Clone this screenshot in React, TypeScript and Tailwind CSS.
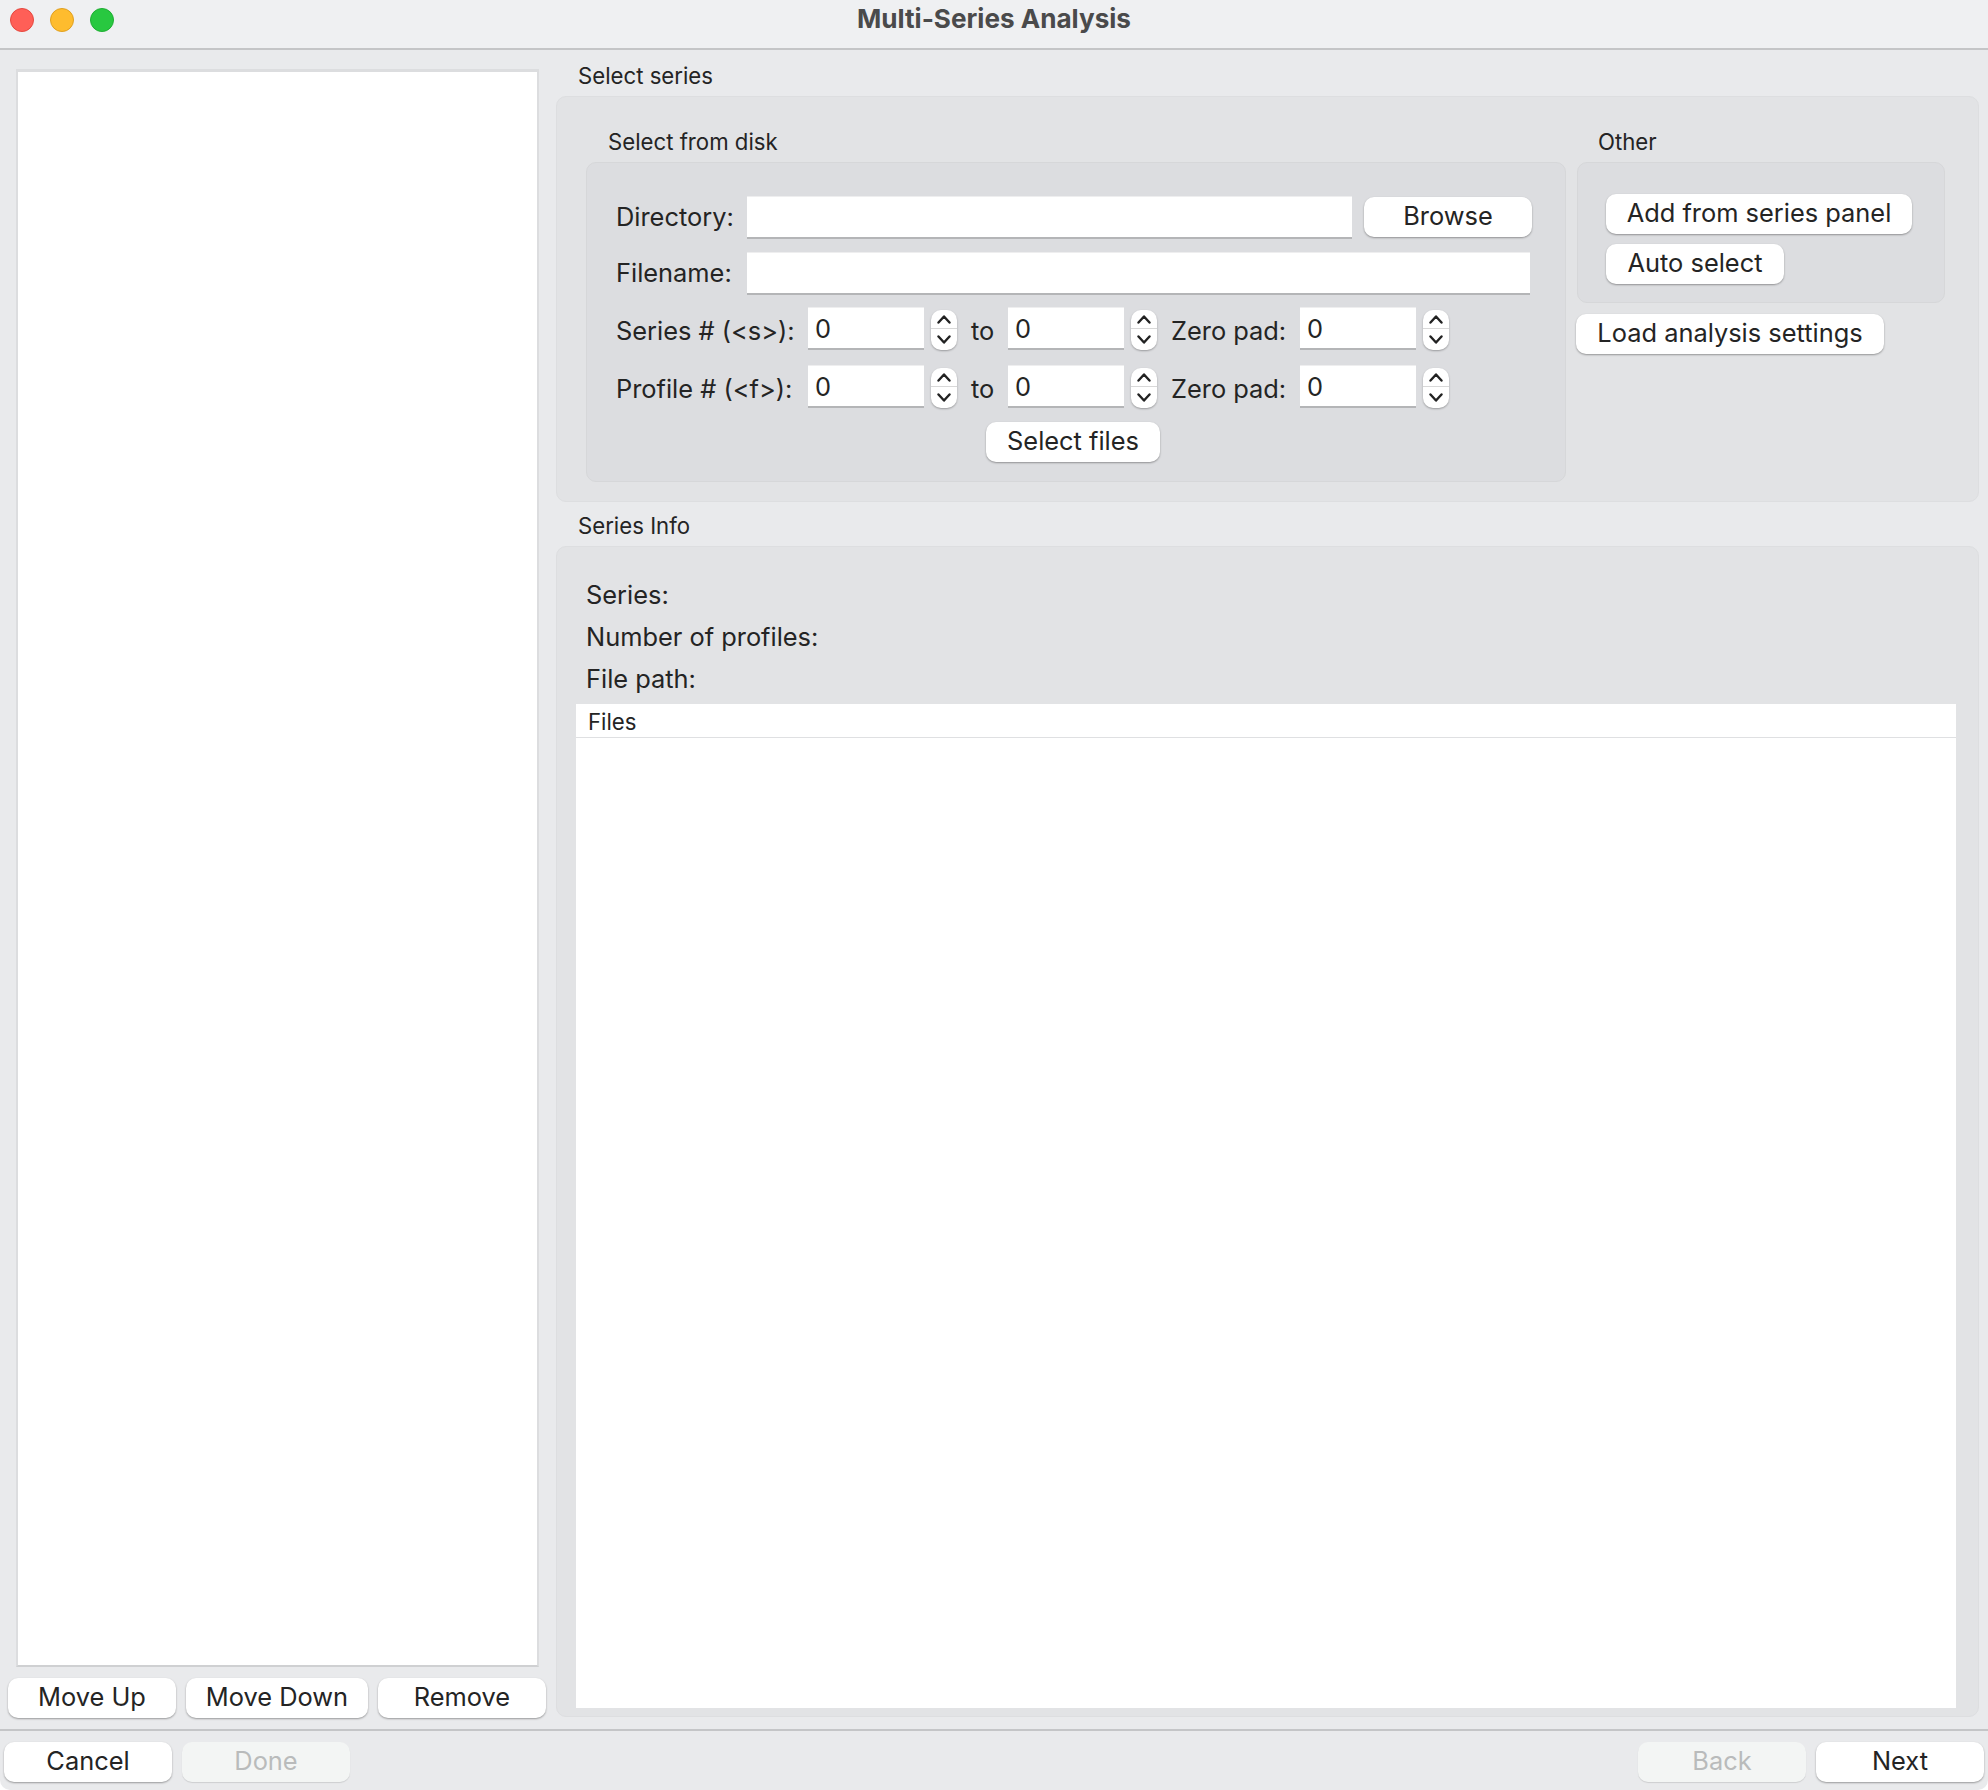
import type { ReactNode } from 'react'

const FONT = "font-['Inter','Liberation_Sans',sans-serif]"

function Btn({ children, className = '', disabled = false }: { children: ReactNode; className?: string; disabled?: boolean }) {
  return (
    <button
      className={`h-10 pb-[2px] rounded-[10px] flex items-center justify-center text-[25.4px] ${
        disabled
          ? 'bg-[#f3f5f4] text-[#b9bbbb] shadow-[0_1px_1px_rgba(0,0,0,0.12)]'
          : 'bg-white text-[#242424] shadow-[0_1px_2px_rgba(0,0,0,0.35)]'
      } ${className}`}
    >
      {children}
    </button>
  )
}

function Field({ className = '', value }: { className?: string; value?: string }) {
  return (
    <div className={`h-[43px] bg-white border-t border-[#eeeeef] border-b-2 border-b-[#b4b5b7] pl-[7px] text-[25.4px] leading-[41px] text-[#242424] ${className}`}>
      {value}
    </div>
  )
}

function Spinner() {
  return (
    <div className="w-[26px] h-10 mt-[3px] ml-[7px] rounded-[10px] bg-white shadow-[0_1px_2px_rgba(0,0,0,0.3)] flex flex-col">
      <div className="h-[19px] flex items-center justify-center border-b border-[#d8d8d8]">
        <svg width="14" height="9" viewBox="0 0 14 9" fill="none" stroke="#222" strokeWidth="2.4" strokeLinecap="round" strokeLinejoin="round">
          <path d="M1.5 7.5 7 1.5l5.500 6" />
        </svg>
      </div>
      <div className="flex-1 flex items-center justify-center">
        <svg width="14" height="9" viewBox="0 0 14 9" fill="none" stroke="#222" strokeWidth="2.4" strokeLinecap="round" strokeLinejoin="round">
          <path d="M1.500 1.500 7 7.500l5.500-6" />
        </svg>
      </div>
    </div>
  )
}

function RangeRow({ label }: { label: string }) {
  return (
    <div className="flex h-[43px] pl-[30px]">
      <div className="w-[192px] text-[25.4px] leading-[48px]">{label}</div>
      <Field className="w-[116px]" value="0" />
      <Spinner />
      <div className="w-[51px] pl-[14px] text-[25.4px] leading-[48px]">to</div>
      <Field className="w-[116px]" value="0" />
      <Spinner />
      <div className="w-[143px] pl-[14px] text-[25.4px] leading-[48px]">Zero pad:</div>
      <Field className="w-[116px]" value="0" />
      <Spinner />
    </div>
  )
}

export default function App() {
  return (
    <div className={`w-[1988px] h-[1790px] flex flex-col bg-[#e9eaec] text-[#242424] overflow-hidden rounded-b-[10px] ${FONT}`}>
      {/* Title bar */}
      <div className="h-[50px] shrink-0 bg-[#eff0f2] border-b-2 border-[#c4c5c7] grid grid-cols-[1fr_auto_1fr] items-start pt-2">
        <div className="flex pl-[10px] gap-4">
          <div className="w-6 h-6 rounded-full bg-[#ff5f57] border border-[#e5483f]" />
          <div className="w-6 h-6 rounded-full bg-[#febc2e] border border-[#e0a020]" />
          <div className="w-6 h-6 rounded-full bg-[#28c840] border border-[#1fae33]" />
        </div>
        <div className="text-[26.1px] leading-6 font-bold text-[#4a4a4b] -mt-px">Multi-Series Analysis</div>
        <div />
      </div>

      <div className="h-[1679px] shrink-0 flex">
        {/* Series list */}
        <div className="w-[556px] shrink-0 flex flex-col">
          <div className="ml-4 mt-[19px] w-[523px] h-[1598px] bg-white border-2 border-t-[3px] border-[#dcdddf] border-b-[#cfd0d2]" />
          <div className="flex gap-[10px] ml-2 mt-[11px]">
            <Btn className="w-[168px]">Move Up</Btn>
            <Btn className="w-[182px]">Move Down</Btn>
            <Btn className="w-[168px]">Remove</Btn>
          </div>
        </div>

        <div className="flex-1 flex flex-col pr-[9px]">
          <div className="h-[46px] pl-[22px] text-[22.2px] leading-[52px]">Select series</div>

          {/* Select series group */}
          <div className="h-[406px] shrink-0 bg-[#e2e3e5] border border-[#dddee0] rounded-[10px] flex pl-[29px]">
            <div className="w-[980px] shrink-0">
              <div className="h-[65px] pl-[22px] text-[22.2px] leading-[90px]">Select from disk</div>
              <div className="h-[320px] bg-[#dcdde0] border border-[#d6d7d9] rounded-[10px] pt-[33px]">
                <div className="flex pl-[29px] h-[43px]">
                  <div className="w-[131px] text-[25.4px] leading-[42px]">Directory:</div>
                  <Field className="w-[605px]" />
                  <Btn className="w-[168px] ml-3 mt-px">Browse</Btn>
                </div>
                <div className="flex pl-[29px] h-[43px] mt-[13px]">
                  <div className="w-[131px] text-[25.4px] leading-[42px]">Filename:</div>
                  <Field className="w-[783px]" />
                </div>
                <div className="mt-3 flex flex-col gap-[15px] -ml-px">
                  <RangeRow label="Series # (<s>):" />
                  <RangeRow label="Profile # (<f>):" />
                </div>
                <div className="mt-[14px] pl-[399px]">
                  <Btn className="w-[174px]">Select files</Btn>
                </div>
              </div>
            </div>
            <div className="ml-[11px] w-[368px] shrink-0">
              <div className="h-[65px] pl-[21px] text-[22.2px] leading-[90px]">Other</div>
              <div className="h-[141px] bg-[#dcdde0] border border-[#d6d7d9] rounded-[10px] pl-[28px] pt-[31px] flex flex-col items-start gap-[10px]">
                <Btn className="w-[306px]">Add from series panel</Btn>
                <Btn className="w-[178px]">Auto select</Btn>
              </div>
              <Btn className="w-[308px] mt-[11px] -ml-px">Load analysis settings</Btn>
            </div>
          </div>

          <div className="h-[44px] pl-[22px] text-[22.2px] leading-[48px]">Series Info</div>

          {/* Series info group */}
          <div className="h-[1171px] bg-[#e2e3e5] border border-[#dddee0] rounded-[10px] flex flex-col pl-[19px] pr-[22px] pb-[8px]">
            <div className="pt-[27px] pl-[10px] text-[25.4px] leading-[42px] h-[157px] shrink-0">
              <div>Series:</div>
              <div>Number of profiles:</div>
              <div>File path:</div>
            </div>
            <div className="flex-1 bg-white">
              <div className="h-[34px] border-b border-[#dfe0e2] pl-3 text-[22.2px] leading-[36px]">Files</div>
            </div>
          </div>
        </div>
      </div>

      {/* Footer */}
      <div className="flex-1 border-t-2 border-[#c4c5c7] flex pl-1 pr-1 pt-[11px] gap-[10px]">
        <Btn className="w-[168px]">Cancel</Btn>
        <Btn className="w-[168px]" disabled>Done</Btn>
        <div className="flex-1" />
        <Btn className="w-[168px]" disabled>Back</Btn>
        <Btn className="w-[168px]">Next</Btn>
      </div>
    </div>
  )
}
